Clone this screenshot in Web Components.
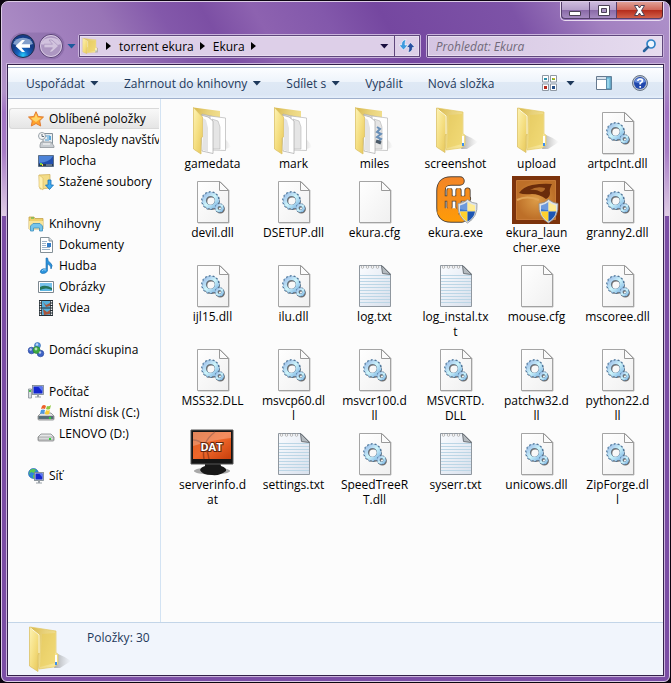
<!DOCTYPE html>
<html lang="cs">
<head>
<meta charset="utf-8">
<title>Ekura</title>
<style>
html,body{height:100%}
body{margin:0;background:#0b0510;font-family:"Open Sans","Noto Sans",sans-serif;font-size:12px;line-height:15px;color:#000}
</style>
</head>
<body>
<explorer-window>
  <window-controls slot="controls"></window-controls>
  <history-buttons slot="nav"></history-buttons>
  <address-bar slot="nav">
    <path-crumb>torrent ekura</path-crumb>
    <path-crumb>Ekura</path-crumb>
  </address-bar>
  <search-box slot="nav" hint="Prohledat: Ekura"></search-box>
  <command-bar slot="commands">
    <command-button arrow>Uspořádat</command-button>
    <command-button arrow>Zahrnout do knihovny</command-button>
    <command-button arrow>Sdílet s</command-button>
    <command-button>Vypálit</command-button>
    <command-button>Nová složka</command-button>
    <view-tools slot="tools"></view-tools>
  </command-bar>
  <nav-pane slot="side">
    <nav-group>
      <nav-item icon="star" top selected>Oblíbené položky</nav-item>
      <nav-item icon="recent">Naposledy navštívené</nav-item>
      <nav-item icon="desktop">Plocha</nav-item>
      <nav-item icon="download">Stažené soubory</nav-item>
    </nav-group>
    <nav-group>
      <nav-item icon="library" top>Knihovny</nav-item>
      <nav-item icon="document">Dokumenty</nav-item>
      <nav-item icon="music">Hudba</nav-item>
      <nav-item icon="picture">Obrázky</nav-item>
      <nav-item icon="video">Videa</nav-item>
    </nav-group>
    <nav-group><nav-item icon="homegroup" top>Domácí skupina</nav-item></nav-group>
    <nav-group>
      <nav-item icon="computer" top>Počítač</nav-item>
      <nav-item icon="sysdisk">Místní disk (C:)</nav-item>
      <nav-item icon="disk">LENOVO (D:)</nav-item>
    </nav-group>
    <nav-group><nav-item icon="network" top>Síť</nav-item></nav-group>
  </nav-pane>
  <file-grid slot="files">
    <file-tile icon="folderdocs">gamedata</file-tile>
    <file-tile icon="folderdocs">mark</file-tile>
    <file-tile icon="foldermiles">miles</file-tile>
    <file-tile icon="folder">screenshot</file-tile>
    <file-tile icon="folder">upload</file-tile>
    <file-tile icon="dll">artpclnt.dll</file-tile>
    <file-tile icon="dll">devil.dll</file-tile>
    <file-tile icon="dll">DSETUP.dll</file-tile>
    <file-tile icon="blank">ekura.cfg</file-tile>
    <file-tile icon="ekura">ekura.exe</file-tile>
    <file-tile icon="launcher">ekura_laun<br>cher.exe</file-tile>
    <file-tile icon="dll">granny2.dll</file-tile>
    <file-tile icon="dll">ijl15.dll</file-tile>
    <file-tile icon="dll">ilu.dll</file-tile>
    <file-tile icon="text">log.txt</file-tile>
    <file-tile icon="text">log_instal.tx<br>t</file-tile>
    <file-tile icon="blank">mouse.cfg</file-tile>
    <file-tile icon="dll">mscoree.dll</file-tile>
    <file-tile icon="dll">MSS32.DLL</file-tile>
    <file-tile icon="dll">msvcp60.dl<br>l</file-tile>
    <file-tile icon="dll">msvcr100.d<br>ll</file-tile>
    <file-tile icon="dll">MSVCRTD.<br>DLL</file-tile>
    <file-tile icon="dll">patchw32.d<br>ll</file-tile>
    <file-tile icon="dll">python22.d<br>ll</file-tile>
    <file-tile icon="dat">serverinfo.d<br>at</file-tile>
    <file-tile icon="text">settings.txt</file-tile>
    <file-tile icon="dll">SpeedTreeR<br>T.dll</file-tile>
    <file-tile icon="text">syserr.txt</file-tile>
    <file-tile icon="dll">unicows.dll</file-tile>
    <file-tile icon="dll">ZipForge.dl<br>l</file-tile>
  </file-grid>
  <details-pane slot="details">Položky: 30</details-pane>
</explorer-window>

<script>
const FOLDER_BACK = `<defs><linearGradient id="fb" x1="0" x2="1" y2=".6"><stop offset="0" stop-color="#d9b94c"/><stop offset=".45" stop-color="#e8d27c"/><stop offset="1" stop-color="#f6e596"/></linearGradient><linearGradient id="ff" x1="0" x2="1" y2="1"><stop offset="0" stop-color="#fdf3b4"/><stop offset=".5" stop-color="#f5df82"/><stop offset="1" stop-color="#e6c658"/></linearGradient><linearGradient id="sh" x2="1"><stop offset="0" stop-color="#777" stop-opacity=".6"/><stop offset="1" stop-color="#999" stop-opacity="0"/></linearGradient></defs>`;
const FOLDER = FOLDER_BACK + `<path d="M30 42 34 28Q42 31 47 35L36 42Z" fill="url(#sh)"/><path d="M6 1 32 5V27L34 28V38L30 41 15 43Z" fill="url(#fb)" stroke="#e3c966" stroke-width=".7"/><path d="M18 8 31 7V37L16 41Z" fill="#e9c94e" opacity=".45"/><path d="M32 29V38" stroke="#fff" stroke-width="2"/><path d="M32 36V39" stroke="#3b8ff0" stroke-width="2"/><path d="M5.500 1 15 9V27L14 29V45.500L5.500 40Z" fill="url(#ff)" stroke="#dcc168" stroke-width=".8"/><path d="M6.500 2 15 9V27" fill="none" stroke="#fffbe0" stroke-width="1"/>`;
const folderDocs = inner => FOLDER_BACK + `<path d="M33 42V28Q41 35 43 40L35 43Z" fill="url(#sh)" opacity=".6"/><path d="M5.500 .5 32 4V40L15 44Z" fill="url(#fb)"/><path d="M14 7 27 10V42L15 43Z" fill="#ddd" stroke="#aaa" stroke-width=".6"/><path d="M22 9 37.500 11V43.500L23 43Z" fill="#fff" stroke="#b5b5b5" stroke-width=".7"/><path d="M24 12 30 14 32 20V42H24Z" fill="#e5e5e5" stroke="#aaa" stroke-width=".5"/>${inner}<path d="M13 8 20 10 25 14V46.500L14 44Z" fill="#fff" stroke="#a8a8a8" stroke-width=".7"/><path d="M15 11 18 13 20 21V45L15 43Z" fill="#e4e4e4"/><path d="M5.500 .5 14.500 10V30L13 31V47L5.500 42Z" fill="url(#ff)" stroke="#dcc168" stroke-width=".8"/>`;
const PAGE = `<defs><linearGradient id="pg" x2="1" y2="1"><stop offset="0" stop-color="#fff"/><stop offset="1" stop-color="#f0f0f0"/></linearGradient></defs><path d="M9.500 5.500H32L40.500 14V46.500H9.500Z" fill="url(#pg)" stroke="#a5a5a5"/><path d="M10 47H41V14" fill="none" stroke="#999" opacity=".6"/><path d="M31.500 5.500V14.500H40.500Z" fill="#fbfbfb" stroke="#999"/>`;
const gear = (x, y, r, w, n) => { const c = 2 * Math.PI * (r + w / 2); const d = c / n / 2; return `<circle cx="${x + .8}" cy="${y + 1}" r="${r}" fill="none" stroke="#444" stroke-opacity=".75" stroke-width="${w + 1.2}"/><circle cx="${x}" cy="${y}" r="${r + w / 2}" fill="none" stroke="#456f96" stroke-width="${w * .8}" stroke-dasharray="${d} ${d}"/><circle cx="${x}" cy="${y}" r="${r}" fill="none" stroke="#5e7c98" stroke-width="${w + .8}"/><circle cx="${x}" cy="${y}" r="${r + w / 2 - .3}" fill="none" stroke="#a5cdec" stroke-width="${w * .6}" stroke-dasharray="${d} ${d}"/><circle cx="${x}" cy="${y}" r="${r}" fill="none" stroke="url(#gg)" stroke-width="${w}"/>`; };
const SHIELD = `<g transform="translate(-1.500 0)"><path d="M38 23.500Q43 27.500 47.500 27.500Q48.500 41 38 47Q27.500 41 28.500 27.500Q34 27.500 38 23.500Z" fill="#dde3e8" stroke="#8a8f95" stroke-width=".8"/><path d="M38 26Q34 29 30.500 29.500V35.500H38Z" fill="#3c78d2"/><path d="M38 26Q42 29 45.500 29.500V35.500H38Z" fill="#ffe672"/><path d="M30.500 35.500Q31.500 42 38 45.500V35.500Z" fill="#ffd02e"/><path d="M45.500 35.500Q44.500 42 38 45.500V35.500Z" fill="#1d56b4"/><path d="M30 29Q34 29 38 26Q42 29 46 29V34Q38 35 30 33Z" fill="#fff" opacity=".25"/></g>`;
const SCREEN = (x, y, w, h) => `<rect x="${x}" y="${y}" width="${w}" height="${h}" fill="#c9d2da" stroke="#77828c" stroke-width=".8"/><rect x="${x + 1}" y="${y + 1}" width="${w - 2}" height="${h - 2}" fill="#1426d0"/><path d="M${x + w - 1} ${y + 1}V${y + h - 3}L${x + w / 2} ${y + 1}Z" fill="#5b78f2"/><path d="M${x + w / 2 - 1} ${y + h}h2v2h2v1h-6v-1h2z" fill="#9aa1a8"/>`;
const DRIVE = led => `<path d="M3 8H13L16 11V14Q16 15 15 15H1Q0 15 0 14V11Z" fill="#e5e6e7" stroke="#838688" stroke-width=".8"/><path d="M.5 11H15.500V14H.5Z" fill="${led}" stroke="#777" stroke-width=".5"/><path d="M12 12V14" stroke="#2fd13a" stroke-width="2"/>`;
const EKURA_ARMS = 'M29 5H20Q10 5 10 15V32Q10 42 20 42H31';
const EKURA_FORK = 'M12 22.500H37M18.500 14.500V31M27.500 14.500V31M36.500 14.500V24';
const ICONS = {
  folder: [48, FOLDER],
  folderdocs: [48, folderDocs('')],
  foldermiles: [48, folderDocs('<path d="M27 20 30 22 27 25 31 27 27 30 31 32 28 35" fill="none" stroke="#6a90b8" stroke-width="2"/><path d="M26 34 31 36" stroke="#4b5a68" stroke-width="3"/>')],
  blank: [48, PAGE],
  dll: [48, PAGE + `<defs><linearGradient id="gg" x1="0" x2="1" y1="0" y2="1"><stop offset="0" stop-color="#9fc0ea"/><stop offset=".5" stop-color="#cdf5fb"/><stop offset="1" stop-color="#86bbe6"/></linearGradient></defs>` + gear(22.500, 24.500, 6.300, 3.400, 14) + gear(31.500, 32, 3, 2, 9)],
  text: [48, `<defs><linearGradient id="tx" x2="1" y2="1"><stop offset="0" stop-color="#fafcff"/><stop offset="1" stop-color="#d8e0ec"/></linearGradient></defs><path d="M9.500 5.500H32L40.500 14V46.500H9.500Z" fill="url(#tx)" stroke="#8f979f"/><path d="M10 15.500H40M10 18.500H40M10 21.500H40M10 24.500H40M10 27.500H40M10 30.500H40M10 33.500H40M10 36.500H40M10 39.500H40M10 42.500H40" stroke="#bcd6e6"/><path d="M31.500 5.500 40.500 14.500 32.500 13.500Z" fill="#b4babf" stroke="#6d7379"/><g fill="#fff" stroke="#9c9c9c" stroke-width=".7"><circle cx="12.500" cy="7" r="1.300"/><circle cx="17.500" cy="7" r="1.300"/><circle cx="22.500" cy="7" r="1.300"/><circle cx="27.500" cy="7" r="1.300"/></g>`],
  ekura: [48, `<defs><linearGradient id="eo" gradientUnits="userSpaceOnUse" x1="0" x2="0" y1="0" y2="48"><stop offset="0" stop-color="#f38428"/><stop offset="1" stop-color="#ff9c06"/></linearGradient></defs><path d="M14 9H36V36H14Z" fill="#fff"/><g fill="none" stroke-linecap="round" stroke-linejoin="round"><path d="${EKURA_ARMS}" stroke="#4d4035" stroke-width="9.500"/><path d="${EKURA_FORK}" stroke="#4d4035" stroke-width="6.200"/><path d="${EKURA_ARMS}M10 36H24" stroke="url(#eo)" stroke-width="7.500"/><path d="${EKURA_FORK}" stroke="#f68d1c" stroke-width="4.500"/><path d="M16 11.500H34" stroke="#fff" stroke-width="1.500"/><path d="M23 16V19M32 16V19M23 27V31M31.500 27V31" stroke="#fff" stroke-width="1.800"/></g>` + SHIELD],
  launcher: [48, `<defs><radialGradient id="lg"><stop offset="0" stop-color="#dc9c48"/><stop offset="1" stop-color="#bd6f28"/></radialGradient></defs><path fill="#7c330c" d="M0 0H48V48H0Z"/><path fill="url(#lg)" stroke="#c87a36" d="M4.500 4.500H43.500V43.500H4.500Z"/><path d="M7 17Q11 11 20 9Q31 7 40 8Q37 13 38 17Q38 21 34 23Q27 18 20 18Q12 19 7 17Z" fill="#6a2c0b"/><path d="M18 14Q24 10 33 12Q33 15 29 16Q24 13 18 14Z" fill="#b06a2a"/><path d="M5 24Q15 19 27 24" fill="none" stroke="#e0a457" stroke-width="2"/>` + SHIELD],
  dat: [48, `<defs><linearGradient id="dm" x2="1" y2="1"><stop offset="0" stop-color="#d95c22"/><stop offset=".5" stop-color="#f0672a"/><stop offset="1" stop-color="#c73f0c"/></linearGradient></defs><ellipse cx="24" cy="43" rx="18" ry="3.500" fill="#555" opacity=".5"/><path d="M17 34H32L33 38Q39 40 38 43Q32 48 24 47Q14 47 12 42Q13 39 17 38Z" fill="#181818"/><path d="M3 2H45V36H3Z" fill="#151515" stroke="#555"/><path d="M5 4H43V31H5Z" fill="url(#dm)"/><path d="M5 12Q18 12 21 31M16 31Q13 14 27 4" fill="none" stroke="#a5421d" stroke-width="1.500"/><path d="M5 4H43V10Q24 12 5 18Z" fill="#fff" opacity=".25"/><text x="23.500" y="23" text-anchor="middle" font-family="Open Sans,sans-serif" font-size="11" font-weight="700" fill="#fff" stroke="#61240d" stroke-width="2" paint-order="stroke">DAT</text>`],
  star: [16, `<path d="M8 .7 10.200 5.500 15.500 6 11.700 9.700 12.700 15 8 12.500 3.300 15 4.300 9.700 .5 6 5.800 5.500Z" fill="#ffa32b" stroke="#e07c33"/><path d="M8 2.500 9.500 6.500 13.500 7 10 9.500 8 11 5 9 3 7 6.500 6.500Z" fill="#ffd568"/>`],
  recent: [16, `<path d="M5 1.500H14.500V11.500H5Z" fill="#e8edf1" stroke="#83909a"/><path d="M7 4H12M9 6H13M7 8H11" stroke="#4c9bd1"/><path d="M11 4H13V8H11Z" fill="#5ba9dd"/><path d="M3 10H13L16 14V15.500H2V13Z" fill="#c7ccd1" stroke="#858b91" stroke-width=".7"/><path d="M5 12H12" stroke="#fff"/><circle cx="4" cy="4" r="3.500" fill="#f4f5f6" stroke="#9aa3aa"/><path d="M4 2V4.500H6" fill="none" stroke="#5f6d79"/>`],
  desktop: [16, `<path d="M.5 2.500H15.500V13.500H.5Z" fill="#224fae" stroke="#5b6f88"/><path d="M1 3H15Q12 9 1 10Z" fill="#4c83d8"/><path d="M1 11H15V13H1Z" fill="#293c52"/><path d="M2 10H4V12H2Z" fill="#7ad43b"/><path d="M4 11H5V13H4Z" fill="#ffd53b"/><path d="M8 12H14" stroke="#9bafc5"/>`],
  download: [16, `<path d="M1 1 12 .5V14L2 15Z" fill="#f3dc87" stroke="#cfae55" stroke-width=".7"/><path d="M1 1 5 4V16L1 13Z" fill="#fff0ae" stroke="#d8ba63" stroke-width=".6"/><path d="M10 6H13V11H15.500L11.500 15.500 7.500 11H10Z" fill="#3eaaf0" stroke="#1970b5" stroke-width=".8"/>`],
  library: [16, `<path d="M1 1H6L7 2.500H15V13H1Z" fill="#eed06b" stroke="#c5a34b" stroke-width=".8"/><path d="M1 5H15V13H1Z" fill="#f8e59a"/><path d="M3 2H6" stroke="#42b44e"/><path d="M2.500 15V10L5 7.500H12L14.500 10V15H11.500V12H5.500V15Z" fill="#75c5ec" stroke="#3d8fbd" stroke-width=".8"/>`],
  document: [16, `<path d="M2.500 .5H11L14.500 4V15.500H2.500Z" fill="#fff" stroke="#849097"/><path d="M11 .5V4H14.500" fill="#d9e0e5" stroke="#849097"/><path d="M4 4.500H9M4 6.500H8M4 8.500H8M4 10.500H12M4 12.500H12" stroke="#9db4c9"/><path d="M9 6H13V10H9Z" fill="#327cc8"/>`],
  music: [16, `<path d="M8 0H9.500Q9.500 3 12.500 5T13 11Q13 7 9.500 6V13Q8 16 4 15.500Q1 14.500 3 12Q5 10 8 11Z" fill="#2b93dc" stroke="#1869ac" stroke-width=".6"/><path d="M4 13Q5 11 8 12" fill="none" stroke="#94d3fc"/>`],
  picture: [16, `<path d="M.5 2.500H15.500V13.500H.5Z" fill="#fff" stroke="#7c8790"/><path d="M2 4H14V12H2Z" fill="#78c2ec"/><path d="M2 8Q7 5 14 9V12H2Z" fill="#25745b"/><path d="M2 11Q8 8 14 11V12H2Z" fill="#5cb5e0"/>`],
  video: [16, `<path d="M1 0H15V16H1Z" fill="#232d34"/><path d="M4 1H12V7.500H4ZM4 8.500H12V15H4Z" fill="#56b1df"/><path d="M5 2 8 5 12 3V6L8 7ZM5 9 9 12 12 10V14L6 15Z" fill="#a7563c"/><path d="M2.500 1V16M13.500 1V16" stroke="#eee" stroke-width="1.500" stroke-dasharray="1.500 1"/>`],
  homegroup: [16, `<g stroke-width=".6"><circle cx="9.500" cy="3.500" r="3" fill="#5297e4" stroke="#315fa8"/><circle cx="3.500" cy="8.500" r="3.300" fill="#3f64c7" stroke="#243f93"/><circle cx="12.500" cy="11.500" r="3.300" fill="#3f64c7" stroke="#243f93"/><circle cx="8.500" cy="8" r="3.500" fill="#3ea942" stroke="#267d32"/></g><g fill="#fff" opacity=".65"><circle cx="9" cy="2.500" r="1.200"/><circle cx="2.700" cy="7.500" r="1.200"/><circle cx="12" cy="10.500" r="1.200"/><circle cx="8" cy="7" r="1.400"/></g>`],
  computer: [16, `<path d="M.5 5H3.500V14H.5Z" fill="#d9dee2" stroke="#858e96" stroke-width=".8"/><path d="M1 6H3V8H1Z" fill="#48c04c"/>` + SCREEN(4.500, 1.500, 11, 9)],
  sysdisk: [16, DRIVE('#516c79') + `<path d="M4 1Q6 -1 8 1L7 4Q5 3 3 4Z" fill="#ee6129"/><path d="M9 1Q11 2 13 0L12 4Q10 5 8 4Z" fill="#8fc73e"/><path d="M3 5Q5 4 7 5L6 9Q4 8 2 9Z" fill="#4c96df"/><path d="M8 5Q10 6 12 5L11 9Q9 10 7 9Z" fill="#fbcb32"/>`],
  disk: [16, DRIVE('#d7d9da')],
  network: [16, `<circle cx="5.500" cy="5.500" r="5" fill="#2d86da" stroke="#1b5ca9" stroke-width=".6"/><path d="M2 2Q6 0 8 2L6 5 3 4 1 7ZM5 7 8 6 7 10H5Z" fill="#5cca50"/>` + SCREEN(6.500, 4.500, 9, 8)],
  back: [24, `<defs><radialGradient id="bk" cy=".9"><stop offset="0" stop-color="#27ccf8"/><stop offset=".45" stop-color="#1467c3"/><stop offset="1" stop-color="#153d88"/></radialGradient></defs><circle cx="12" cy="12" r="11.500" fill="url(#bk)" stroke="#26304f"/><path d="M2 10A10.500 9 0 0 1 22 10Q12 14 2 10Z" fill="#bfd4ef" opacity=".65"/><path d="M4.500 12 11 6H14L10.500 10.200H19V13.800H10.500L14 18H11Z" fill="#fff"/>`],
  forward: [24, `<circle cx="12" cy="12" r="11.500" fill="#ad97c2" stroke="#594275"/><circle cx="12" cy="12" r="10.500" fill="none" stroke="#d8c9e4"/><path d="M2 10A10.500 9 0 0 1 22 10Q12 14 2 10Z" fill="#e5d8ec" opacity=".65"/><path d="M19.500 12 13 6H10L13.500 10.200H5V13.800H13.500L10 18H13Z" fill="#d2c4de" stroke="#a892bb" stroke-width=".7"/>`],
  refresh: [16, `<path d="M7 1.500Q2.500 2 2.500 7H0L4.500 12 9 7H6Q6 4 7 1.500Z" fill="#3f9ade" stroke="#fff" stroke-width=".6"/><path d="M9 14.500Q13.500 14 13.500 9.500H16L11.500 4.500 7.500 9.500H10Q10 12 9 14.500Z" fill="#284fa0" stroke="#fff" stroke-width=".6"/>`],
  search: [16, `<circle cx="9" cy="6" r="4" fill="#eef6ff" stroke="#3183c7" stroke-width="1.700"/><path d="M6 9 2 13" stroke="#29629d" stroke-width="2.500" stroke-linecap="round"/>`],
  views: [16, `<g fill="#fff" stroke="#8f98a3"><path d="M1.500 .5H7.500V7H1.500ZM9.500 .5H15.500V7H9.500ZM1.500 9H7.500V15.500H1.500ZM9.500 9H15.500V15.500H9.500Z"/></g><path d="M3 3H6V5H3Z" fill="#2f91ad"/><path d="M11 3H14V5H11Z" fill="#77b63a"/><path d="M3 11H6V14H3Z" fill="#b52a1d"/><path d="M11 11H14V14H11Z" fill="#254f88"/><path d="M12 3H14V4H12Z" fill="#e6b32b"/>`],
  preview: [16, `<path d="M.5 1.500H15.500V14.500H.5Z" fill="#fff" stroke="#66798e"/><path d="M1 2H15V4H1Z" fill="#d9e3ed"/><path d="M1 4.500H10" stroke="#8297ad"/><path d="M10.500 2V14H15V2Z" fill="#74bedb" stroke="#5a8dac"/><path d="M12 4V13" stroke="#bdeaf8"/>`],
  help: [16, `<circle cx="8" cy="8" r="7.500" fill="#b8c1ce" stroke="#667386"/><circle cx="8" cy="8" r="6" fill="#2148ad"/><path d="M2.500 7A5.600 5 0 0 1 13.500 7Q8 9 2.500 7Z" fill="#6c91df"/><path d="M5.800 6Q6 4 8.200 4Q10.500 4 10.400 6Q10.300 7 8.200 8.300V9.500M8.200 11V12.700" fill="none" stroke="#fff" stroke-width="1.700"/>`]
};
const define = (name, css, html) => {
  const template = document.createElement('template');
  customElements.define(name, class extends HTMLElement {
    connectedCallback() {
      if (this.shadowRoot) return;
      template.innerHTML = `<style>*{box-sizing:border-box}button{font:inherit;color:inherit;margin:0;border:0;background:none;padding:0}${css}</style>${typeof html === 'function' ? html(this) : html}`;
      this.attachShadow({ mode: 'open' }).append(template.content.cloneNode(true));
    }
  });
};

define('shell-icon', ':host{display:block;flex:none}svg{display:block;overflow:visible}', el => {
  const [size, body] = ICONS[el.getAttribute('name')];
  return `<svg width="${size}" height="${size}" viewBox="0 0 ${size} ${size}" aria-hidden="true">${body}</svg>`;
});

define('down-arrow', ':host{display:block;flex:none;width:9px;height:5px;background:currentColor;clip-path:polygon(0 0,100% 0,50% 100%)}', '');

define('explorer-window', `
:host{display:block;height:100%;min-height:683px;box-sizing:border-box;padding:1px}
.frame{height:100%;display:flex;flex-direction:column;border:1px solid #dccbe6;border-radius:7px 7px 6px 6px;padding:0 5px 5px 5px;
 background:
 linear-gradient(#0000 214px,#7b4ea5 214px),
 linear-gradient(#0000 90px,#a274c4 110px,#a87dc6 150px,#dfcce5 213px) 0 0/100% 100%,
 linear-gradient(60deg,#b597cb 0,#a382bf 13%,#9874b6 22%,#8358aa 30%,#7c4fa4 36%,#8d62b0 43%,#8358ab 52%,#7547a0 60%,#7d53a7 78%,#a280c0 89%,#ae91ca 100%) 0 0/100% 120px}
header{flex:none;height:62px}
.top{display:flex;justify-content:flex-end;height:31px}
.nav{display:flex;align-items:center;padding:0 0 0 3px;height:26px}
.client{flex:1;display:flex;flex-direction:column;border:1px solid #33214a;box-shadow:0 0 0 1px #cbb5dc;background:#fcfcfc;min-height:0}
.body{flex:1;display:flex;min-height:0}
`, `<div class="frame"><header><div class="top"><slot name="controls"></slot></div><div class="nav"><slot name="nav"></slot></div></header>
<div class="client"><slot name="commands"></slot><div class="body"><slot name="side"></slot><slot name="files"></slot></div><slot name="details"></slot></div></div>`);

define('window-controls', `
:host{display:flex;height:18px;border:1px solid #e9dcf0;border-top:0;border-radius:0 0 5px 5px;overflow:hidden}
button{height:17px;display:grid;place-items:center;background:linear-gradient(#cdbbdc 0,#b59fca 48%,#8a6aa8 52%,#a58ac0);border:1px solid #55406b;border-top:0;border-right:0}
.a{width:28px;border-radius:0 0 0 4px}.b{width:27px}.c{width:47px;background:linear-gradient(#e0a096 0,#d0685a 48%,#b52c1c 52%,#d2604a);border-right:1px solid #55202b;border-radius:0 0 4px 0}
svg{display:block}`, `<button class="a" aria-label="Minimalizovat"><svg width="13" height="11"><path d="M.5 6.500H11.500V10.500H.5Z" fill="#fff" stroke="#4b4256"/></svg></button><button class="b" aria-label="Maximalizovat"><svg width="13" height="11"><path d="M1.500 .5H12.500V10.500H1.500Z" fill="#fff" stroke="#4b4256"/><path d="M4.500 3.500H9.500V7.500H4.500Z" fill="#aa93c2" stroke="#4b4256"/></svg></button><button class="c" aria-label="Zavřít"><svg width="13" height="11"><path d="M1.500 .5H5L6.500 3 8 .5H11.500L8.500 5.500 11.500 10.500H8L6.500 8 5 10.500H1.500L4.500 5.500Z" fill="#fff" stroke="#4b4256"/></svg></button>`);

define('history-buttons', `
:host{display:flex;align-items:center;flex:none;width:68px}
.pair{display:flex;gap:4px;padding:1px;border-radius:13px;background:#7b609a66;box-shadow:0 0 1px #5b3f7a}
down-arrow{color:#1c5a9c;margin-left:3px}`, `<div class="pair"><button aria-label="Zpět"><shell-icon name="back"></shell-icon></button><button aria-label="Vpřed"><shell-icon name="forward"></shell-icon></button></div><button aria-label="Poslední stránky"><down-arrow></down-arrow></button>`);

define('address-bar', `
:host{display:flex;align-items:center;flex:342 1 0;min-width:0;height:24px;box-sizing:border-box;border:1px solid #c9b3dc;border-radius:2px;margin-right:5px}
.in{flex:1;display:flex;align-items:center;align-self:stretch;border:1px solid #5f477c;background:#ddcfe8;min-width:0;padding-left:2px;box-shadow:inset 0 0 0 1px #e8def0}
.f{width:16px;height:16px;margin-right:7px}
.f svg{display:block}
.go{width:0;height:0;border:4px solid #0000;border-left:5px solid #000;border-right:0;margin-left:1px}
.gap{flex:1}
.d{padding:6px 5px;color:#1a0f40}
.r{align-self:stretch;border-left:1px solid #5f477c;width:25px;display:grid;place-items:center}`, `<div class="in"><span class="f"><svg width="16" height="16" viewBox="4 0 32 46" preserveAspectRatio="none">${FOLDER}</svg></span><span class="go"></span><slot></slot><span class="gap"></span><button class="d" aria-label="Předchozí umístění"><down-arrow></down-arrow></button><button class="r" aria-label="Aktualizovat"><shell-icon name="refresh"></shell-icon></button></div>`);

define('path-crumb', `:host{display:flex;align-items:center;flex:none}button{padding:0 6px 0 8px}i{width:0;height:0;border:4px solid #0000;border-left:5px solid #000;border-right:0}`, `<button><slot></slot></button><i></i>`);

define('search-box', `
:host{display:flex;flex:237 1 0;min-width:0;height:24px;box-sizing:border-box;border:1px solid #c9b3dc;border-radius:2px}
label{flex:1;display:flex;align-items:center;border:1px solid #5f477c;background:linear-gradient(90deg,#d5c5e2,#e6dcef);box-shadow:inset 0 0 0 1px #e8def0;padding:0 4px 0 8px;min-width:0}
input{flex:1;min-width:0;border:0;background:none;font:italic 12px/15px "Open Sans","Noto Sans",sans-serif;padding:0;outline:0}
input::placeholder{color:#716a7a;opacity:1}`, el => `<label><input type="text" aria-label="Prohledat" placeholder="${el.getAttribute('hint')}"><shell-icon name="search"></shell-icon></label>`);

define('command-bar', `
:host{display:flex;align-items:center;flex:none;height:34px;box-sizing:border-box;border-top:1px solid #fff;border-bottom:1px solid #9fb0cc;padding:2px 15px 0 18px;color:#1e395b;background:linear-gradient(#fff 0 1px,#a5b5cf 1px 2px,#fcfdff 2px,#eef4fb 49%,#dfe9f5 51%,#dbe6f4 90%,#e4eefb)}
.l{display:flex;gap:25px;flex:1}`, `<div class="l"><slot></slot></div><slot name="tools"></slot>`);

define('command-button', `:host{display:block;white-space:nowrap}button{display:flex;align-items:center;gap:5px}`, el => `<button><span><slot></slot></span>${el.hasAttribute('arrow') ? '<down-arrow></down-arrow>' : ''}</button>`);

define('view-tools', `:host{display:flex;align-items:center}button{display:block}.v{margin-right:9px}.d{padding:5px 0;margin-right:21px}.p{margin-right:20px}`, `<button class="v" aria-label="Změnit zobrazení"><shell-icon name="views"></shell-icon></button><button class="d" aria-label="Další možnosti"><down-arrow></down-arrow></button><button class="p" aria-label="Zobrazit podokno náhledu"><shell-icon name="preview"></shell-icon></button><button aria-label="Nápověda"><shell-icon name="help"></shell-icon></button>`);

define('nav-pane', `:host{display:block;flex:none;width:153px;box-sizing:border-box;border-right:1px solid #d3e3f3;padding:9px 1px 0 1px;overflow:hidden}nav{display:flex;flex-direction:column;gap:21px}`, `<nav><slot></slot></nav>`);
define('nav-group', `:host{display:block}`, `<slot></slot>`);
define('nav-item', `
:host{display:block}
a{display:flex;align-items:center;gap:5px;height:21px;padding-left:29px;color:inherit;text-decoration:none;white-space:nowrap;overflow:hidden}
:host([top]) a{padding-left:19px}
:host([selected]) a{background:linear-gradient(#f8f8f8,#e5e5e5);border:1px solid #d9d9d9;border-right:0;border-radius:3px 0 0 3px;padding-left:18px}`, el => `<a href="#"><shell-icon name="${el.getAttribute('icon')}"></shell-icon><span><slot></slot></span></a>`);

define('file-grid', `:host{display:grid;flex:1;min-width:0;grid-template-columns:repeat(auto-fill,81px);align-content:start;row-gap:5px;padding:8px 4px 0 11px}`, `<slot></slot>`);
define('file-tile', `:host{display:flex;flex-direction:column;align-items:center;text-align:center}shell-icon{padding-right:1px}span{white-space:nowrap;padding-top:1px}`, el => `<shell-icon name="${el.getAttribute('icon')}"></shell-icon><span><slot></slot></span>`);

define('details-pane', `:host{display:flex;flex:none;gap:15px;height:53px;box-sizing:border-box;border-top:1px solid #c3d5e8;background:#f1f5fc;padding:3px 0 0 16px;color:#1e395b;align-items:flex-start}span{padding-top:4px}`, `<shell-icon name="folder"></shell-icon><span><slot></slot></span>`);
</script>
</body>
</html>
